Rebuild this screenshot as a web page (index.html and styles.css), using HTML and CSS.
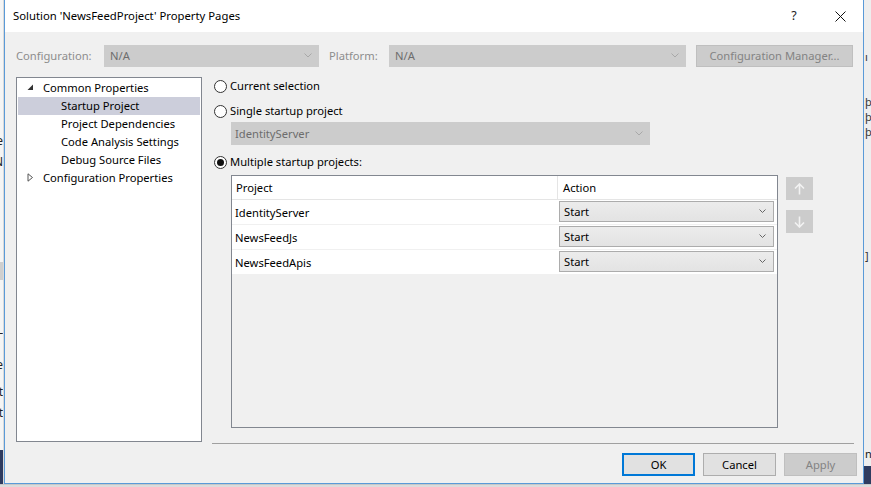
FILE: index.html
```html
<!DOCTYPE html>
<html>
<head>
<meta charset="utf-8">
<title>Property Pages</title>
<link rel="stylesheet" href="styles.css">
</head>
<body>
<div class="backdrop">
  <div class="bd-left">
    <span class="bd-frag f1">e</span>
    <span class="bd-frag f2">N</span>
    <div class="bd-bar b1"></div>
    <span class="bd-frag f3">L</span>
    <span class="bd-frag f4">re</span>
    <span class="bd-frag f5">ut</span>
    <span class="bd-frag f6">ut</span>
    <div class="bd-navy n1"></div>
  </div>
  <div class="bd-right">
    <span class="bd-rg g0">ı</span>
    <span class="bd-rg g1">þ</span>
    <span class="bd-rg g2">þ</span>
    <span class="bd-rg g3">þ</span>
    <span class="bd-rg g4">]</span>
    <span class="bd-rg g5">n</span>
    <div class="bd-navy n2"></div>
  </div>
  <div class="bd-bottom"></div>
</div>

<div class="dialog">
  <div class="titlebar">
    <span class="title">Solution 'NewsFeedProject' Property Pages</span>
    <span class="cap cap-help">?</span>
    <span class="cap cap-close">
      <svg width="11" height="11" viewBox="0 0 11 11"><path d="M0.5 0.5 L10.5 10.5 M10.5 0.5 L0.5 10.5" stroke="#111" stroke-width="1" fill="none"/></svg>
    </span>
  </div>

  <div class="body">
    <div class="toprow">
      <span class="lbl lbl-config">Configuration:</span>
      <div class="combo combo-dis w-config"><span>N/A</span><svg class="chev" width="8" height="5" viewBox="0 0 8 5"><path d="M0.5 0.5 L4 4 L7.5 0.5" stroke="#a8a8a8" fill="none"/></svg></div>
      <span class="lbl lbl-platform">Platform:</span>
      <div class="combo combo-dis w-platform"><span>N/A</span><svg class="chev" width="8" height="5" viewBox="0 0 8 5"><path d="M0.5 0.5 L4 4 L7.5 0.5" stroke="#a8a8a8" fill="none"/></svg></div>
      <div class="btn btn-dis w-cm">Configuration Manager...</div>
    </div>

    <div class="main">
      <div class="tree">
        <div class="node lvl0"><svg class="tri" width="7" height="7" viewBox="0 0 7 7"><path d="M6 0.5 L6 6 L0.5 6 Z" fill="#333"/></svg><span>Common Properties</span></div>
        <div class="node lvl1 sel"><span>Startup Project</span></div>
        <div class="node lvl1"><span>Project Dependencies</span></div>
        <div class="node lvl1"><span>Code Analysis Settings</span></div>
        <div class="node lvl1"><span>Debug Source Files</span></div>
        <div class="node lvl0"><svg class="tri" width="7" height="9" viewBox="0 0 7 9"><path d="M1 0.8 L5.5 4.5 L1 8.2 Z" fill="none" stroke="#555" stroke-width="1"/></svg><span>Configuration Properties</span></div>
      </div>

      <div class="panel">
        <div class="radio-row r1"><span class="radio"></span><span>Current selection</span></div>
        <div class="radio-row r2"><span class="radio"></span><span>Single startup project</span></div>
        <div class="combo combo-dis w-single"><span>IdentityServer</span><svg class="chev" width="8" height="5" viewBox="0 0 8 5"><path d="M0.5 0.5 L4 4 L7.5 0.5" stroke="#a8a8a8" fill="none"/></svg></div>
        <div class="radio-row r3"><span class="radio on"></span><span>Multiple startup projects:</span></div>

        <div class="grid-area">
          <div class="grid">
            <div class="grow ghead">
              <div class="gcell c-proj">Project</div>
              <div class="gcell c-act">Action</div>
            </div>
            <div class="grow">
              <div class="gcell c-proj">IdentityServer</div>
              <div class="gcell c-act"><div class="combo combo-row"><span>Start</span><svg class="chev" width="7" height="4" viewBox="0 0 7 4"><path d="M0.5 0.5 L3.5 3.5 L6.5 0.5" stroke="#666" fill="none"/></svg></div></div>
            </div>
            <div class="grow">
              <div class="gcell c-proj">NewsFeedJs</div>
              <div class="gcell c-act"><div class="combo combo-row"><span>Start</span><svg class="chev" width="7" height="4" viewBox="0 0 7 4"><path d="M0.5 0.5 L3.5 3.5 L6.5 0.5" stroke="#666" fill="none"/></svg></div></div>
            </div>
            <div class="grow">
              <div class="gcell c-proj">NewsFeedApis</div>
              <div class="gcell c-act"><div class="combo combo-row"><span>Start</span><svg class="chev" width="7" height="4" viewBox="0 0 7 4"><path d="M0.5 0.5 L3.5 3.5 L6.5 0.5" stroke="#666" fill="none"/></svg></div></div>
            </div>
          </div>
          <div class="movers">
            <div class="mover"><svg width="11" height="12" viewBox="0 0 11 12"><path d="M5.5 1 L5.5 11.5 M1 5.5 L5.5 1 L10 5.5" stroke="#f2f2f2" stroke-width="1.6" fill="none"/></svg></div>
            <div class="mover down"><svg width="11" height="12" viewBox="0 0 11 12"><path d="M5.5 0.5 L5.5 11 M1 6.5 L5.5 11 L10 6.5" stroke="#f2f2f2" stroke-width="1.6" fill="none"/></svg></div>
          </div>
        </div>

        <div class="sep"></div>
      </div>
    </div>

    <div class="footer">
      <div class="btn btn-default">OK</div>
      <div class="btn">Cancel</div>
      <div class="btn btn-dis">Apply</div>
    </div>
  </div>
</div>
</body>
</html>
```

FILE: styles.css
```css
* { box-sizing: border-box; margin: 0; padding: 0; }
html, body { width: 871px; height: 487px; overflow: hidden; }
body {
  position: relative;
  background: #f2f2f2;
  font-family: "Noto Sans", "Open Sans", sans-serif;
  font-size: 11.2px;
  color: #000;
}

/* ---------- backdrop (window behind the dialog) ---------- */
.backdrop { position: absolute; left: 0; top: 0; width: 871px; height: 487px; }
.bd-left { position: absolute; left: 0; top: 0; width: 4px; height: 487px; background: #f5f5f5; overflow: hidden; border-right: 1px solid #d9d9d9; }
.bd-frag { position: absolute; right: 0; font-size: 12px; color: #222; line-height: 14px; }
.f1 { top: 134px; }
.f2 { top: 155px; }
.f3 { top: 323px; }
.f4 { top: 358px; }
.f5 { top: 385px; }
.f6 { top: 406px; }
.bd-bar { position: absolute; left: 0; width: 4px; }
.b1 { top: 262px; height: 18px; background: #cfcfcf; }
.bd-navy { position: absolute; background: #2e3b5f; }
.n1 { left: 0; top: 450px; width: 4px; height: 37px; }
.bd-right { position: absolute; left: 864px; top: 0; width: 7px; height: 487px; background: #eeeeee; overflow: hidden; }
.bd-rg { position: absolute; left: 1px; font-size: 11px; line-height: 12px; color: #333; }
.g0 { top: 51px; }
.g1 { top: 96px; }
.g2 { top: 111px; }
.g3 { top: 126px; }
.g4 { top: 250px; }
.g5 { top: 448px; color: #111; }
.n2 { left: 0; top: 466px; width: 7px; height: 21px; }
.bd-bottom { position: absolute; left: 0; top: 484px; width: 871px; height: 3px; background: #dcdcdc; border-top: 1px solid #c8c8c8; }

/* ---------- dialog ---------- */
.dialog {
  position: absolute;
  left: 4px;
  top: -1px;
  width: 860px;
  height: 485px;
  border: 1px solid #5a9ad8;
  background: #f0f0f0;
  display: flex;
  flex-direction: column;
}
.titlebar {
  height: 32px;
  background: #ffffff;
  display: flex;
  align-items: center;
  flex: none;
}
.title { padding-left: 8px; font-size: 11.3px; color: #000; flex: 1; line-height: 16px; padding-bottom: 1px; }
.cap { width: 46px; height: 32px; display: flex; align-items: center; justify-content: center; }
.cap-help { font-size: 12.5px; color: #222; padding-bottom: 2px; }
.cap-close svg { display: block; }

.body { flex: 1; display: flex; flex-direction: column; padding: 13px 0 0 11px; }

.toprow { display: flex; align-items: center; height: 22px; }
.lbl { color: #8d8d8d; white-space: nowrap; padding-bottom: 1px; }
.lbl-config { width: 88px; }
.lbl-platform { width: 60px; margin-left: 10px; }

.combo {
  display: flex;
  align-items: center;
  justify-content: space-between;
  height: 22px;
  padding: 0 6px 1px 5px;
  border: 1px solid #cccccc;
  white-space: nowrap;
}
.combo-dis { background: #cccccc; color: #6d6d6d; }
.chev { display: block; flex: none; }
.w-config { width: 215px; }
.w-platform { width: 297px; }
.w-single { width: 419px; margin-left: 19px; margin-top: 2px; padding-left: 3px; height: 23px; }

.btn {
  height: 22px;
  display: flex;
  align-items: center;
  justify-content: center;
  border: 1px solid #adadad;
  background: #e1e1e1;
  white-space: nowrap;
  padding-bottom: 1px;
}
.btn-dis { background: #cccccc; border-color: #bfbfbf; color: #838383; }
.w-cm { width: 157px; margin-left: 10px; }

/* ---------- main ---------- */
.main { display: flex; margin-top: 10px; height: 367px; }

.tree {
  width: 186px;
  height: 365px;
  background: #ffffff;
  border: 1px solid #828790;
  padding: 1px 1px 0 1px;
  flex: none;
}
.node { height: 18px; display: flex; align-items: center; white-space: nowrap; padding-bottom: 2px; }
.node.lvl0 { padding-left: 9px; }
.node.lvl0 .tri { margin-right: 9px; flex: none; display: block; margin-top: 1px; }
.node.lvl1 { padding-left: 43px; }
.node.sel { background: #cccedb; }

.panel { flex: 1; display: flex; flex-direction: column; margin-left: 10px; }
.radio-row { display: flex; align-items: center; height: 18px; white-space: nowrap; padding-left: 2px; }
.radio-row > span:last-child { padding-bottom: 2px; }
.r2 { margin-top: 7px; }
.r3 { margin-top: 8px; }
.radio {
  width: 13px;
  height: 13px;
  border: 1px solid #333333;
  border-radius: 50%;
  background: #ffffff;
  margin-right: 3px;
  flex: none;
  display: flex;
  align-items: center;
  justify-content: center;
}
.radio.on::after { content: ""; width: 7px; height: 7px; border-radius: 50%; background: #111; }

.grid-area { display: flex; margin-top: 4px; margin-left: 19px; }
.grid {
  width: 547px;
  height: 253px;
  border: 1px solid #828790;
  background: #f0f0f0;
  flex: none;
}
.grow { display: flex; height: 25px; background: #ffffff; border-bottom: 1px solid #f0f0f0; }
.ghead { height: 24px; border-bottom: 1px solid #e5e5e5; }
.gcell { display: flex; align-items: center; white-space: nowrap; }
.c-proj { width: 326px; padding-left: 3px; }
.ghead .c-proj { padding-left: 4px; border-right: 1px solid #e5e5e5; }
.c-act { flex: 1; padding: 1px 3px 2px 1px; }
.ghead .c-act { padding-left: 5px; }
.combo-row {
  width: 100%;
  height: 21px;
  background: linear-gradient(#ececec, #e3e3e3);
  border: 1px solid #acacac;
  padding: 0 7px 1px 4px;
}

.movers { display: flex; flex-direction: column; gap: 10px; margin-left: 8px; margin-top: 2px; }
.mover { width: 27px; height: 23px; background: #cccccc; display: flex; align-items: center; justify-content: center; }
.mover svg { display: block; }

.sep { margin-top: auto; height: 1px; background: #a0a0a0; margin-right: 9px; }

/* ---------- footer ---------- */
.footer { display: flex; justify-content: flex-end; gap: 8px; margin-top: 9px; padding-right: 6px; }
.footer .btn { width: 73px; height: 23px; }
.btn-default { border-color: #0078d7; box-shadow: inset 0 0 0 1px #0078d7; }
```
